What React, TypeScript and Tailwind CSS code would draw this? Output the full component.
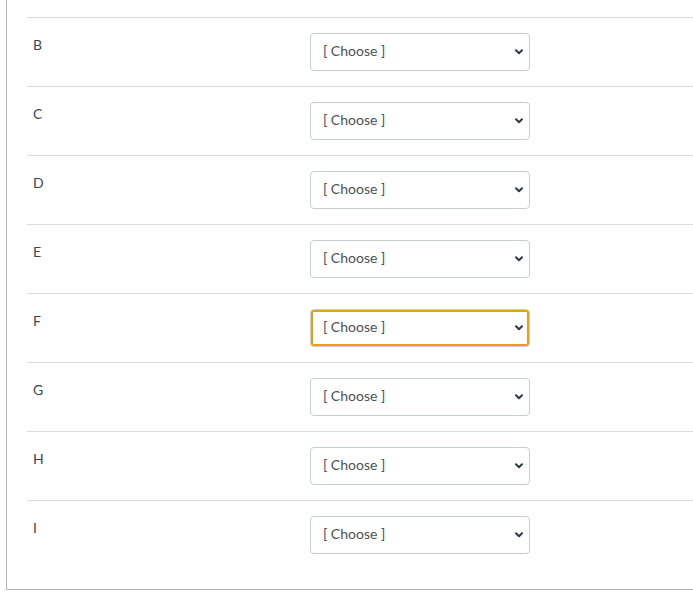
const rows = ['B', 'C', 'D', 'E', 'F', 'G', 'H', 'I'];

function Chevron() {
  return (
    <svg
      className="pointer-events-none absolute right-[7px] top-1/2 -translate-y-1/2"
      width="8"
      height="6"
      viewBox="0 0 8 6"
      fill="none"
    >
      <path d="M1 1.2 L4 4.2 L7 1.2" stroke="#2d3b45" strokeWidth="2" strokeLinecap="round" strokeLinejoin="round" />
    </svg>
  );
}

function MatchRow({label, focused}: {label: string; focused?: boolean}) {
  return (
    <div className="flex border-t border-[#dcdcdc]">
      <div className="w-[283px] shrink-0 pl-[6px] pt-[17px] text-[14px] leading-5 text-[#3b4650]">
        {label}
      </div>
      <div className="py-[15px]">
        <div className="relative w-[220px]">
          <select
            defaultValue=""
            className={
              'block h-[38px] w-full appearance-none rounded-[4px] border border-[#c7cdd1] bg-white pb-[3px] pl-[12px] pr-6 text-[14px] text-[#4a5157]' +
              (focused ? ' outline-2 outline-offset-[-3px] outline-[#e99e14]' : ' outline-none')
            }
          >
            <option value="">[ Choose ]</option>
            <option value="1">Option 1</option>
            <option value="2">Option 2</option>
          </select>
          <Chevron />
        </div>
      </div>
    </div>
  );
}

export default function App() {
  return (
    <div className="min-h-[593px] bg-white pb-[3px] font-['Lato','Liberation_Sans',sans-serif]">
      <div className="ml-[6px] border-b border-l border-[#b2b2b2] pl-[20px] pt-[17px] pb-[20px]">
        {rows.map((r) => (
          <MatchRow key={r} label={r} focused={r === 'F'} />
        ))}
      </div>
    </div>
  );
}
